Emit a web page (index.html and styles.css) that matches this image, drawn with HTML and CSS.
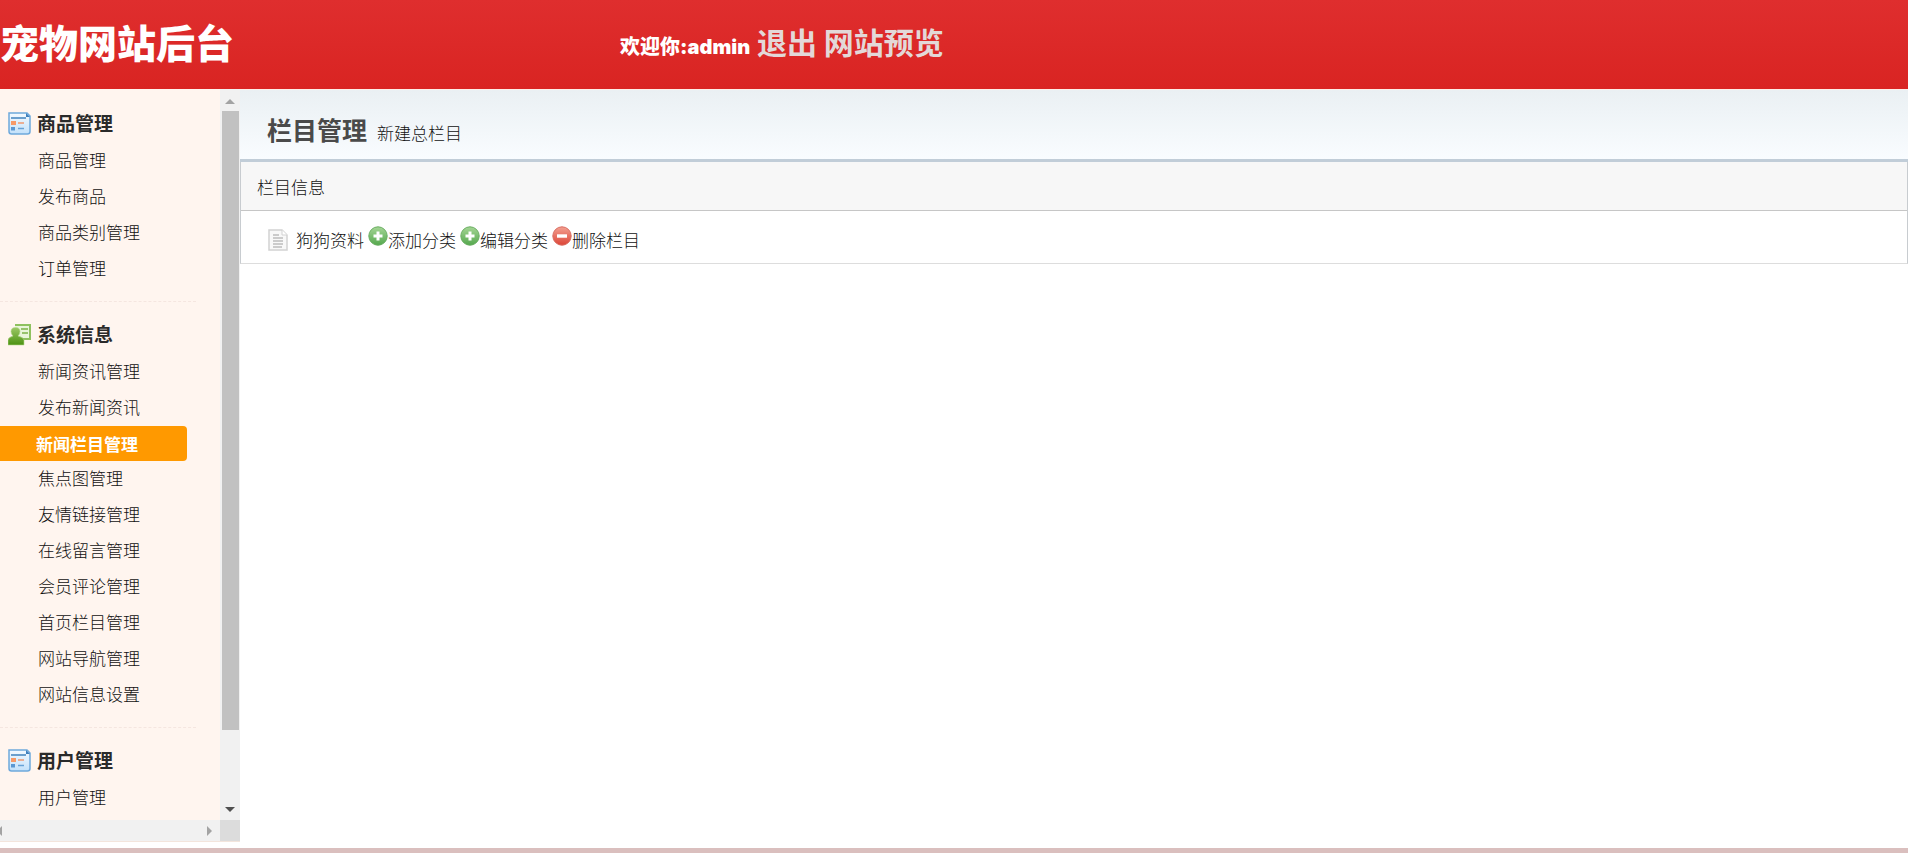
FILE: index.html
```html
<!DOCTYPE html>
<html lang="zh-CN">

<head>
    <meta charset="UTF-8">
    <meta name="viewport" content="width=device-width, initial-scale=1.0">
    <title>宠物网站后台</title>
    <link rel="stylesheet" href="styles.css">
</head>

<body>
    <!-- 公用图标 -->
    <svg class="sprite" aria-hidden="true">
        <defs>
            <linearGradient id="blue" x1="0" y1="0" x2="0" y2="1">
                <stop offset="0" stop-color="#f4faff"/>
                <stop offset="1" stop-color="#c3e1fa"/>
            </linearGradient>
            <linearGradient id="leaf" x1="0" y1="0" x2="0" y2="1">
                <stop offset="0" stop-color="#9cc866"/>
                <stop offset="1" stop-color="#4c9212"/>
            </linearGradient>
            <linearGradient id="green" x1="0" y1="0" x2="0" y2="1">
                <stop offset="0" stop-color="#a5d695"/>
                <stop offset="1" stop-color="#55a84e"/>
            </linearGradient>
            <linearGradient id="red" x1="0" y1="0" x2="0" y2="1">
                <stop offset="0" stop-color="#f3a091"/>
                <stop offset="1" stop-color="#dc4537"/>
            </linearGradient>
        </defs>
        <symbol id="icon-list" viewBox="0 0 23 23">
            <path d="M1 1H19L22 4V19.500Q22 22 19.500 22H3.500Q1 22 1 19.500Z" fill="url(#blue)" stroke="#6fa9dc" stroke-width="1.500"/>
            <path d="M18 1V5H22Z" fill="#3f80bd"/>
            <path d="M3 6H18" stroke="#6b9fcd" stroke-width="2"/>
            <path d="M3 9H8V13H3Z" fill="#f79a68"/>
            <path d="M3 15H7V18.500H3Z" fill="#5b98d2"/>
            <path d="M10 11H16" stroke="#ef9870" stroke-width="1.500"/>
            <path d="M10 16.500H16" stroke="#68a3d6" stroke-width="1.500"/>
        </symbol>
        <symbol id="icon-user" viewBox="0 0 23 23">
            <path d="M7 2H22V16H9" fill="#e9f5d9" stroke="#8fc15f" stroke-width="2"/>
            <path d="M13 6H20M14 10H20" stroke="#7cb348" stroke-width="1.500"/>
            <path d="M0 22V17Q0 14.500 5 13Q3 11 3 8.500Q3 4.500 7.500 4.500Q12 4.500 12 8.500Q12 11 10 13Q16 14.500 16 17V22Z" fill="url(#leaf)" stroke="#b5d88f" stroke-width=".6"/>
        </symbol>
        <symbol id="icon-doc" viewBox="0 0 20 22">
            <path d="M1 1H14L19 6V21H1Z" fill="#f8f8f8" stroke="#d2d2d2" stroke-width="1.500"/>
            <path d="M14 1V6H19" fill="#fff" stroke="#d2d2d2"/>
            <path d="M5 6H11M5 9H15M5 12H15M5 15H15M5 18H14" stroke="#bcbcbc" stroke-width="1.400"/>
        </symbol>
        <symbol id="icon-plus" viewBox="0 0 20 20">
            <circle cx="10" cy="10" r="9.200" fill="url(#green)" stroke="#68ad60"/>
            <path d="M10 5.500V14.500M5.500 10H14.500" stroke="#fff" stroke-width="3"/>
        </symbol>
        <symbol id="icon-minus" viewBox="0 0 20 20">
            <circle cx="10" cy="10" r="9.200" fill="url(#red)" stroke="#d96c60"/>
            <path d="M5 10H15" stroke="#fff" stroke-width="3.400"/>
        </symbol>
    </svg>

    <header class="top">
        <h1 class="logo">宠物网站后台</h1>
        <div class="welcome">
            <span class="hello">欢迎你:admin</span>
            <a href="#">退出</a>
            <a href="#">网站预览</a>
        </div>
    </header>

    <div class="wrap">
        <aside class="side">
            <nav class="menu">
                <section class="group">
                    <h2><svg><use href="#icon-list"/></svg>商品管理</h2>
                    <ul>
                        <li><a href="#">商品管理</a></li>
                        <li><a href="#">发布商品</a></li>
                        <li><a href="#">商品类别管理</a></li>
                        <li><a href="#">订单管理</a></li>
                    </ul>
                </section>
                <section class="group">
                    <h2><svg><use href="#icon-user"/></svg>系统信息</h2>
                    <ul>
                        <li><a href="#">新闻资讯管理</a></li>
                        <li><a href="#">发布新闻资讯</a></li>
                        <li class="current"><a href="#">新闻栏目管理</a></li>
                        <li><a href="#">焦点图管理</a></li>
                        <li><a href="#">友情链接管理</a></li>
                        <li><a href="#">在线留言管理</a></li>
                        <li><a href="#">会员评论管理</a></li>
                        <li><a href="#">首页栏目管理</a></li>
                        <li><a href="#">网站导航管理</a></li>
                        <li><a href="#">网站信息设置</a></li>
                    </ul>
                </section>
                <section class="group">
                    <h2><svg><use href="#icon-list"/></svg>用户管理</h2>
                    <ul>
                        <li><a href="#">用户管理</a></li>
                    </ul>
                </section>
            </nav>
            <div class="vbar">
                <span class="arrow up"></span>
                <div class="track"><div class="thumb"></div></div>
                <span class="arrow down"></span>
            </div>
            <div class="hbar">
                <span class="arrow left"></span>
                <span class="arrow right"></span>
            </div>
            <div class="corner"></div>
        </aside>

        <main class="main">
            <div class="title">
                <h2>栏目管理</h2>
                <a href="#">新建总栏目</a>
            </div>
            <table class="list">
                <thead>
                    <tr><th>栏目信息</th></tr>
                </thead>
                <tbody>
                    <tr>
                        <td>
                            <div class="row">
                                <svg class="doc"><use href="#icon-doc"/></svg>
                                <span class="name">狗狗资料</span>
                                <a href="#"><svg><use href="#icon-plus"/></svg>添加分类</a>
                                <a href="#"><svg><use href="#icon-plus"/></svg>编辑分类</a>
                                <a href="#"><svg><use href="#icon-minus"/></svg>删除栏目</a>
                            </div>
                        </td>
                    </tr>
                </tbody>
            </table>
        </main>
    </div>

    <footer class="bottom"></footer>
</body>

</html>
```

FILE: styles.css
```css
* {
    box-sizing: border-box;
    margin: 0;
    padding: 0;
}

body {
    display: flex;
    flex-direction: column;
    height: 100vh;
    overflow: hidden;
    background: #fff;
    color: #111;
    font-family: "Noto Sans CJK SC", sans-serif;
    font-size: 17px;
    font-weight: 300;
}

a {
    color: #111;
    text-decoration: none;
}

ul {
    list-style: none;
}

.sprite {
    position: absolute;
    width: 0;
    height: 0;
}

/* 顶部 */
.top {
    display: grid;
    grid-template-columns: 32.5% 1fr;
    align-items: start;
    flex: none;
    height: 89px;
    background: linear-gradient(#df2e2e, #d92422);
    color: #fff;
}

.logo {
    font-size: 39px;
    line-height: 82px;
    font-weight: 900;
}

.welcome {
    font-size: 30px;
    line-height: 82px;
    font-weight: 700;
}

.welcome a {
    color: #e3d8d8;
}

.hello {
    font-family: Inter, "Noto Sans CJK SC", sans-serif;
    font-size: 20px;
    font-weight: 900;
}

.wrap {
    display: flex;
    flex: 1;
    min-height: 0;
}

/* 左侧菜单 */
.side {
    display: grid;
    grid-template-columns: 1fr 20px;
    grid-template-rows: minmax(0, 1fr) 21px;
    flex: none;
    width: 240px;
    margin-bottom: 6px;
    border-bottom: 1px solid #f3e5dc;
}

.menu {
    overflow: hidden;
    padding-top: 2px;
    background: #fff5ef;
}

.group {
    width: 196px;
    padding: 12px 0 14px;
    border-bottom: 1px dashed #f5e6e0;
}

.group h2 {
    display: flex;
    align-items: center;
    gap: 6px;
    height: 40px;
    padding-left: 8px;
    color: #2a2a2a;
    font-size: 19px;
    line-height: 36px;
    font-weight: 700;
}

.group h2 svg {
    width: 23px;
    height: 23px;
}

.group li {
    height: 36px;
    padding-left: 38px;
    line-height: 33px;
}

.group .current {
    width: 187px;
    height: 35px;
    padding-left: 36px;
    background: #ff9900;
    border-radius: 0 4px 4px 0;
    line-height: 35px;
    font-weight: 700;
}

.current a {
    color: #fff;
}

/* 滚动条 */
.vbar {
    display: flex;
    flex-direction: column;
    align-items: center;
    background: #f1f1f1;
}

.track {
    flex: 1;
    width: 17px;
}

.thumb {
    height: 90%;
    background: #c1c1c1;
}

.hbar {
    display: flex;
    justify-content: space-between;
    align-items: center;
    padding-right: 8px;
    background: #f1f1f1;
}

.corner {
    background: #dcdcdc;
}

.arrow {
    border: 5px solid transparent;
}

.up {
    margin: 5px 0 7px;
    border-bottom-color: #a3a3a3;
}

.down {
    margin: 8px 0 3px;
    border-top-color: #505050;
}

.left {
    margin-left: -8px;
    border-right-color: #a3a3a3;
}

.right {
    margin-right: -5px;
    border-left-color: #a3a3a3;
}

/* 右侧内容 */
.main {
    flex: 1;
    min-width: 0;
}

.title {
    display: flex;
    align-items: baseline;
    gap: 10px;
    height: 73px;
    padding: 15px 27px 0;
    border-top: 1px solid #fdeee8;
    border-bottom: 3px solid #c1cdd8;
    background: linear-gradient(#eaf0f3, #f9fcff);
}

.title h2 {
    color: #4a4a4a;
    font-size: 25px;
    line-height: 48px;
    font-weight: 700;
}

.list {
    width: 100%;
    border: 1px solid #ddd;
    border-top: 0;
    border-left-color: #c8ccd0;
    border-right-color: #c8ccd0;
    border-spacing: 0;
}

.list th {
    height: 49px;
    padding-left: 16px;
    border-bottom: 1px solid #c6c6c6;
    background: #f7f7f7;
    font-weight: 300;
    text-align: left;
}

.list td {
    height: 52px;
    padding: 5px 27px 0;
}

.row {
    display: flex;
    align-items: center;
    gap: 4px;
}

.row svg {
    width: 20px;
    height: 20px;
}

.row .doc {
    height: 22px;
    margin-right: 4px;
}

.row a {
    display: flex;
    align-items: center;
}

.row a svg {
    margin-bottom: 8px;
}

/* 底部 */
.bottom {
    flex: none;
    height: 5px;
    background: #dabfbe;
}
```
